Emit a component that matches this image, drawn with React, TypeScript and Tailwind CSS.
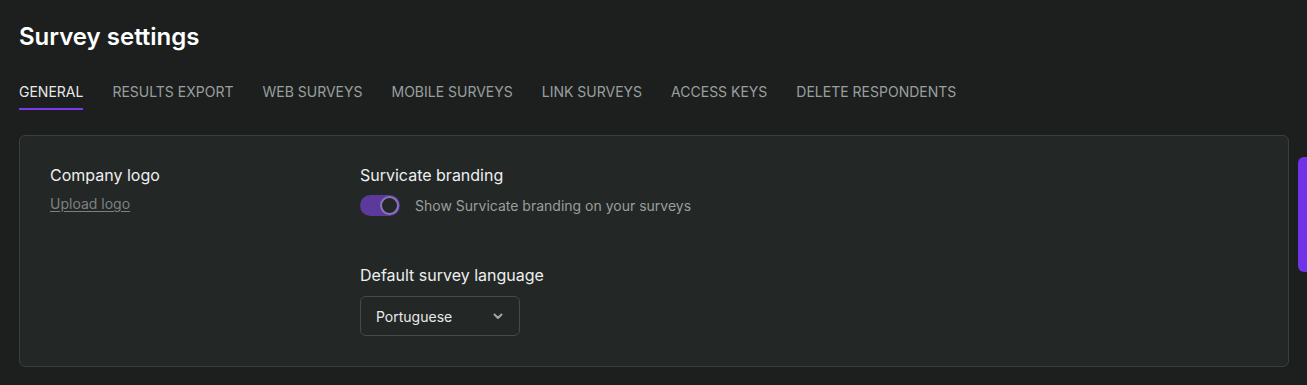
import { FC, useState } from "react";

const tabs = [
  "General",
  "Results export",
  "Web surveys",
  "Mobile surveys",
  "Link surveys",
  "Access keys",
  "Delete respondents",
];

const App: FC = () => {
  const [active, setActive] = useState(0);
  const [branding, setBranding] = useState(true);
  return (
    <div
      className="relative min-h-[385px] w-full bg-[#1c1f1e] text-[#e8eaea] overflow-hidden"
      style={{ fontFamily: "Inter, 'Noto Sans', sans-serif" }}
    >
      <div className="px-[19px] pt-[21px]">
        <h1 className="text-[24px] leading-[32px] font-semibold text-white">
          Survey settings
        </h1>
        <ul className="flex items-center gap-[29px] mt-[26px]">
          {tabs.map((tab, i) => (
            <li key={tab}>
              <button
                type="button"
                className={`uppercase text-[14px] leading-[20px] pb-[6px] border-b-2 ${
                  active === i
                    ? "text-[#e8eaea] border-[#7c3aed]"
                    : "text-[#9a9f9e] border-transparent"
                }`}
                onClick={() => setActive(i)}
              >
                {tab}
              </button>
            </li>
          ))}
        </ul>
        <div className="mt-[25px] w-[1270px] h-[232px] rounded-md border border-[#3a3f3d] bg-[#232726] flex pl-[30px] pt-[27px]">
          <div className="w-[310px]">
            <div className="text-[16px] leading-[24px] text-[#eef0f0]">Company logo</div>
            <a
              href="#"
              className="inline-block mt-[7px] text-[14px] leading-[20px] text-[#7d8281] underline underline-offset-2"
            >
              Upload logo
            </a>
          </div>
          <div>
            <div className="text-[16px] leading-[24px] text-[#eef0f0]">Survicate branding</div>
            <div className="flex items-center gap-[15px] mt-[8px]">
              <button
                type="button"
                onClick={() => setBranding((s) => !s)}
                className={`w-[40px] h-[21px] rounded-full flex items-center px-[1px] ${
                  branding ? "bg-[#5b3a9c] justify-end" : "bg-[#444] justify-start"
                }`}
              >
                <span className="w-[19px] h-[19px] rounded-full bg-[#232726] border-2 border-[#8b73b8]" />
              </button>
              <span className="text-[14px] leading-[20px] text-[#9a9f9e]">
                Show Survicate branding on your surveys
              </span>
            </div>
            <div className="text-[16px] leading-[24px] text-[#eef0f0] mt-[47px]">
              Default survey language
            </div>
            <button
              type="button"
              className="mt-[9px] w-[160px] h-[40px] rounded-md border border-[#464b49] flex items-center justify-between pl-[15px] pr-[14px] text-[14px] text-[#e8eaea]"
            >
              <span>Portuguese</span>
              <svg width="14" height="14" viewBox="0 0 14 14" fill="none">
                <path
                  d="M3.5 5.5 7 9 10.5 5.5"
                  stroke="#a3a8a7"
                  strokeWidth="2"
                  strokeLinecap="round"
                  strokeLinejoin="round"
                />
              </svg>
            </button>
          </div>
        </div>
      </div>
      <div className="absolute right-0 top-[157px] w-[9px] h-[115px] rounded-l-md bg-[#7133ea]" />
    </div>
  );
};

export default App;
